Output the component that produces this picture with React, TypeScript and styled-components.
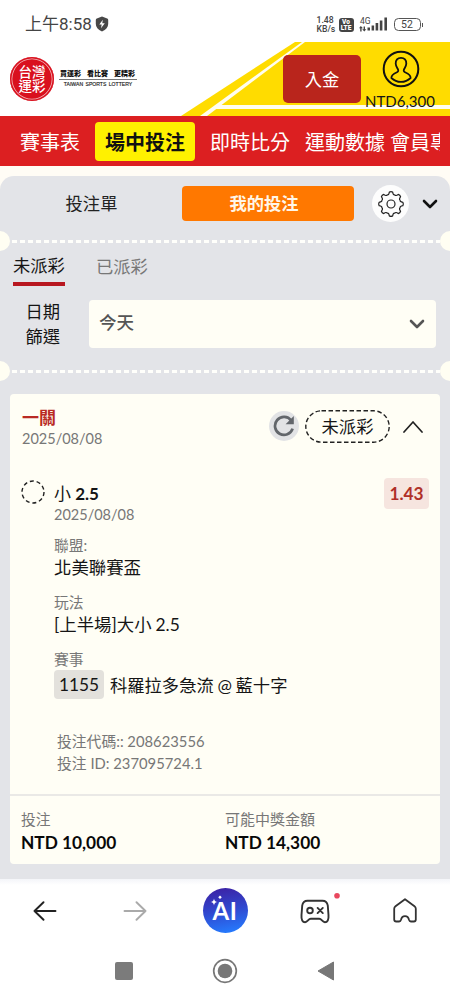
import React from "react";
import styled, { createGlobalStyle } from "styled-components";

const Global = createGlobalStyle`
  * { box-sizing: border-box; }
  body { margin: 0; background: #fff; }
`;

const Phone = styled.div`
  width: 450px;
  height: 1000px;
  overflow: hidden;
  display: flex;
  flex-direction: column;
  background: #fff;
  color: #151515;
  font-family: Lato, "Noto Sans CJK TC", sans-serif;
  white-space: nowrap;
`;

/* status bar */
const StatusBar = styled.div`
  height: 42px;
  flex: none;
  display: flex;
  align-items: center;
  padding: 6px 27px 0 25px;
  color: #444;
  font-family: Roboto, "Noto Sans CJK TC", sans-serif;
`;
const Clock = styled.span`
  font-size: 17px;
  line-height: 24px;
  width: 70px;
`;
const StatusRight = styled.div`
  margin-left: auto;
  display: flex;
  align-items: center;
  padding-top: 1px;
`;
const NetSpeed = styled.div`
  font-size: 8.7px;
  line-height: 9px;
  font-weight: 500;
  width: 22px;
  text-align: left;
`;
const Volte = styled.div`
  width: 15px;
  height: 14px;
  border-radius: 3px;
  background: #444;
  color: #fff;
  font-size: 6.5px;
  line-height: 6.5px;
  font-weight: 900;
  text-align: center;
  padding-top: 1px;
`;
const SignalSvg = styled.svg`
  margin: 0 6px 0 5px;
`;
const Battery = styled.div`
  width: 27px;
  height: 13px;
  border: 1.5px solid #555;
  border-radius: 4.5px;
  font-size: 10.5px;
  line-height: 11px;
  text-align: center;
  font-weight: 400;
`;
const BatteryTip = styled.div`
  width: 1.5px;
  height: 4px;
  margin-left: 1px;
  background: #555;
`;

/* header */
const Header = styled.header`
  height: 74px;
  flex: none;
  display: grid;
  > * { grid-area: 1 / 1; }
`;
const HeaderContent = styled.div`
  z-index: 1;
  display: flex;
  padding-left: 10px;
`;
const Seal = styled.div`
  width: 44px;
  height: 44px;
  margin-top: 15px;
  border-radius: 50%;
  background: #d9101e;
  box-shadow: inset 0 0 0 1.5px #d9101e, inset 0 0 0 2.3px #f3b9bb;
  color: #fff;
  padding-top: 8px;
`;
const SealLine = styled.div`
  font-size: 13.5px;
  line-height: 14px;
  font-weight: 500;
  text-align: center;
`;
const Slogan = styled.div`
  margin: 25px 0 0 5px;
  width: 78px;
  height: 24px;
`;
const SloganMain = styled.div`
  display: flex;
  justify-content: space-between;
  font-size: 7px;
  line-height: 12px;
  font-weight: 900;
  padding: 0 2px 0 1px;
  border-bottom: 1px solid #777;
  color: #111;
`;
const SloganSub = styled.div`
  font-family: "Liberation Sans", sans-serif;
  font-size: 5.1px;
  line-height: 9px;
  text-align: center;
  word-spacing: 1px;
  color: #222;
  -webkit-text-stroke: 0.15px #222;
`;
const Deposit = styled.button`
  margin: 13px 0 0 146px;
  width: 78px;
  height: 48px;
  border: 0;
  border-radius: 5px;
  background: #b9251c;
  color: #fff;
  font: 400 17.3px/50px Lato, "Noto Sans CJK TC", sans-serif;
  padding: 0;
`;
const Account = styled.div`
  width: 80px;
  display: flex;
  flex-direction: column;
  align-items: center;
  padding-top: 8px;
`;
const Balance = styled.div`
  font-size: 15px;
  line-height: 18px;
  margin-top: 4px;
  margin-left: -2px;
`;

/* navigation */
const Nav = styled.nav`
  height: 50px;
  flex: none;
  background: #dc1f21;
  padding: 6px 10px 0 10px;
`;
const NavStrip = styled.div`
  display: flex;
  overflow: hidden;
`;
const NavItem = styled.span<{ $active?: boolean; $w: number }>`
  flex: none;
  width: ${(p) => p.$w}px;
  height: 39px;
  text-align: center;
  border-radius: 4px;
  font-size: 20px;
  line-height: 40px;
  color: ${(p) => (p.$active ? "#111" : "#fff")};
  background: ${(p) => (p.$active ? "#fff100" : "transparent")};
  font-weight: ${(p) => (p.$active ? 700 : 400)};
`;

/* betting slip panel */
const PanelArea = styled.main`
  height: 713px;
  flex: none;
  padding-top: 10px;
  background: #fffcf5;
`;
const Panel = styled.div`
  height: 703px;
  border-radius: 14px 14px 0 0;
  background: #e3e4e8;
  overflow: hidden;
`;
const SlipTabs = styled.div`
  height: 55px;
  display: flex;
  align-items: center;
`;
const SlipTab = styled.div<{ $active?: boolean }>`
  width: ${(p) => (p.$active ? 172 : 182)}px;
  height: 35px;
  border-radius: 4px;
  text-align: center;
  font-size: 17.3px;
  line-height: 35px;
  background: ${(p) => (p.$active ? "#ff7800" : "transparent")};
  color: ${(p) => (p.$active ? "#fff6e8" : "#222")};
  font-weight: ${(p) => (p.$active ? 700 : 400)};
  padding-left: ${(p) => (p.$active ? 0 : 1)}px;
  padding-right: ${(p) => (p.$active ? 8 : 0)}px;
`;
const RoundButton = styled.div<{ $size: number; $bg: string }>`
  width: ${(p) => p.$size}px;
  height: ${(p) => p.$size}px;
  border-radius: 50%;
  background: ${(p) => p.$bg};
  display: flex;
  align-items: center;
  justify-content: center;
`;
const GearSlot = styled.div`
  margin: 0 13px 0 18px;
`;
const Tear = styled.div`
  height: 20px;
  display: flex;
  align-items: center;
  justify-content: space-between;
  background: repeating-linear-gradient(90deg, #fffffb 0 5px, transparent 5px 8px) 12px 9px / 428px 3px no-repeat;
`;
const Notch = styled.div<{ $side: "left" | "right" }>`
  width: 10px;
  height: 20px;
  background: #fffef2;
  border-radius: ${(p) => (p.$side === "left" ? "0 10px 10px 0" : "10px 0 0 10px")};
`;
const StatusTabs = styled.div`
  height: 35px;
  display: flex;
  padding-left: 13px;
  gap: 31px;
`;
const StatusTab = styled.span<{ $active?: boolean }>`
  width: 52px;
  height: 35px;
  font-size: 17.3px;
  line-height: ${(p) => (p.$active ? 29 : 32)}px;
  color: ${(p) => (p.$active ? "#151515" : "#777")};
  border-bottom: ${(p) => (p.$active ? "4px solid #b81720" : "0")};
`;
const FilterRow = styled.div`
  height: 75px;
  display: flex;
  padding: 14px 14px 0 0;
`;
const FilterLabel = styled.div`
  width: 89px;
  padding-left: 25.5px;
  font-size: 17.3px;
  line-height: 25px;
  margin-top: -1px;
`;
const Select = styled.div`
  flex: 1;
  height: 48px;
  border-radius: 4px;
  background: #fffef5;
  display: flex;
  align-items: center;
  justify-content: space-between;
  padding: 0 11px 0 10px;
  font-size: 17.5px;
  line-height: 46px;
  font-weight: 500;
  color: #555;
`;
const SelectValue = styled.span`
  height: 48px;
`;

/* bet card */
const Card = styled.section`
  height: 470px;
  margin: 13px 10px 0;
  border-radius: 4px;
  background: #fffef5;
  display: flex;
  flex-direction: column;
`;
const CardHead = styled.div`
  height: 84px;
  display: flex;
  padding: 13px 17px 0 12px;
`;
const HeadText = styled.div`
  flex: 1;
`;
const BetKind = styled.div`
  font-size: 17px;
  line-height: 22px;
  font-weight: 700;
  color: #b92a24;
`;
const HeadActions = styled.div`
  display: flex;
  align-items: center;
  height: 33px;
  margin-top: 3px;
`;
const RefreshSlot = styled.div`
  height: 32px;
`;
const PillSvg = styled.svg`
  grid-area: 1 / 1;
`;
const Pill = styled.div`
  display: grid;
  width: 85px;
  height: 33px;
  margin: 0 13px 0 6px;
`;
const PillText = styled.span`
  grid-area: 1 / 1;
  text-align: center;
  font-size: 17.3px;
  line-height: 34px;
`;
const Muted = styled.div<{ $lh?: number; $size?: number }>`
  font-size: ${(p) => p.$size ?? 14.8}px;
  line-height: ${(p) => p.$lh ?? 20}px;
  color: #777;
`;
const Selection = styled.div`
  height: 316px;
  display: flex;
  padding: 0 11px 0 11px;
`;
const RingSlot = styled.div`
  width: 33px;
  padding-top: 2px;
`;
const Details = styled.div`
  flex: 1;
`;
const Pick = styled.div`
  font-size: 17px;
  line-height: 24px;
  padding-top: 4px;
  height: 27px;
  font-weight: 700;
`;
const PickSide = styled.span`
  font-weight: 400;
`;
const Value = styled.div`
  font-size: 17.4px;
  line-height: 25px;
  height: 25px;
  word-spacing: -0.6px;
`;
const Field = styled.div<{ $first?: boolean }>`
  padding-top: ${(p) => (p.$first ? 10 : 12)}px;
`;
const Match = styled.div`
  display: flex;
  align-items: center;
  height: 29px;
  margin-top: 1px;
  font-size: 17.3px;
  word-spacing: -0.7px;
`;
const MatchNo = styled.span`
  width: 50px;
  height: 29px;
  margin-right: 6px;
  border-radius: 4px;
  background: #e3e1dc;
  text-align: center;
  line-height: 30px;
`;
const Codes = styled.div`
  padding: 32px 0 0 3px;
`;
const Odds = styled.div`
  width: 45px;
  height: 31px;
  border-radius: 4px;
  background: #f6e5df;
  color: #b03028;
  font-size: 17.3px;
  font-weight: 700;
  line-height: 32px;
  text-align: center;
`;
const Totals = styled.div`
  flex: 1;
  display: grid;
  grid-template-columns: 204px 1fr;
  border-top: 2px solid #eae9e6;
  padding: 13px 11px 0;
`;
const Amount = styled.div`
  font-size: 17.3px;
  line-height: 27px;
  font-weight: 700;
  color: #080808;
`;

/* bottom bars */
const BrowserBar = styled.div`
  height: 63px;
  flex: none;
  display: grid;
  grid-template-columns: repeat(5, 90px);
  justify-items: center;
  align-items: center;
  background: linear-gradient(#f4f5f9, #fff 6px);
`;
const AiButton = styled.div`
  width: 45px;
  height: 45px;
  border-radius: 50%;
  background: linear-gradient(170deg, #3c22a5 5%, #3049d0 50%, #257cff 95%);
  display: grid;
  > * { grid-area: 1 / 1; }
`;
const AiText = styled.span`
  font: 700 24px/45px Lato, sans-serif;
  color: #fff;
  text-align: center;
  letter-spacing: 0.5px;
`;
const SystemBar = styled.div`
  height: 58px;
  flex: none;
  display: flex;
  justify-content: center;
  align-items: center;
  gap: 79px;
  padding-bottom: 1px;
`;

const gearPath = (() => {
  const pt = (r: number, deg: number) => {
    const a = (deg * Math.PI) / 180;
    return `${(14 + r * Math.cos(a)).toFixed(2)} ${(14 + r * Math.sin(a)).toFixed(2)}`;
  };
  let d = `M${pt(12, -8)}`;
  for (let i = 0; i < 8; i++) {
    const c = i * 45;
    d += `Q${pt(12.8, c)} ${pt(12, c + 8)}`;
    d += `C${pt(10, c + 12)} ${pt(9.2, c + 16)} ${pt(9.9, c + 22.5)}`;
    d += `C${pt(9.2, c + 29)} ${pt(10, c + 33)} ${pt(12, c + 37)}`;
  }
  return d + "Z";
})();

const Gear = () => (
  <svg width="28" height="28" fill="none" stroke="#222" strokeWidth="1.2" strokeLinejoin="round">
    <path d={gearPath} />
    <circle cx="14" cy="14" r="4" />
  </svg>
);

const Chevron = ({ color, up, w = 16, h = 10, sw = 2.6 }: { color: string; up?: boolean; w?: number; h?: number; sw?: number }) => (
  <svg width={w} height={h} fill="none" stroke={color} strokeWidth={sw} strokeLinecap="round" strokeLinejoin="round">
    <path d={up ? `M1 ${h - 1}L${w / 2} 1L${w - 1} ${h - 1}` : `M2 2L${w / 2} ${h - 2}L${w - 2} 2`} />
  </svg>
);

const Shield = () => (
  <svg width="14" height="16" viewBox="0 0 14 16">
    <path d="M7 .6L12.2 2.5Q13.2 2.9 13.2 4V8Q13.2 12.6 7 15.4Q.8 12.6.8 8V4Q.8 2.9 1.8 2.5Z" fill="#484848" />
    <path d="M7.8 3.8L4.3 8.6H6.7L6 12.2L9.8 7.2H7.3Z" fill="#fff" />
  </svg>
);

const Signal = () => (
  <SignalSvg width="29" height="17" fill="#444">
    <text x="1" y="7.5" fontSize="8.5" fontFamily="Roboto, sans-serif">4G</text>
    <path d="M1.8 10L4 12.3H2.6V15.5H1.2V12.3H0Z M5.3 15.5L3.2 13.2H4.6V10.500H6V13.200H7.300Z" />
    <path d="M8.5 11.500h2.500v3h-2.500z M12.600 9.500h2.500v5h-2.500z M16.600 7h2.600v7.500h-2.600z M20.800 4.500h2.600v10h-2.600z M25.400 1.500h2.600v13h-2.600z" />
  </SignalSvg>
);

const HeaderArt = () => (
  <svg width="450" height="74">
    <path d="M295 0H450V74H181Z" fill="#ffdc00" />
    <path d="M302 0H305L207 74H200Z" fill="#fffdf0" />
    <path d="M219 63H450V67H212Z" fill="#fffdf0" />
  </svg>
);

const Person = () => (
  <svg width="38" height="38" fill="none" stroke="#111" strokeWidth="2">
    <circle cx="19" cy="19" r="17.300" />
    <path strokeWidth="1.800" strokeLinejoin="round" d="M19 7.800C15.600 7.800 13.500 10.200 13.700 13.800C13.800 16.200 15 17.600 15.900 19.200C16.700 20.800 16.200 21.800 14.500 22.500C11.400 23.700 9.500 24.600 9.400 28C12 30.500 15.200 31.900 19 31.900C22.800 31.900 26 30.500 28.600 28C28.500 24.600 26.600 23.700 23.500 22.500C21.800 21.800 21.300 20.800 22.100 19.200C23 17.600 24.200 16.200 24.300 13.800C24.500 10.200 22.400 7.800 19 7.800Z" />
  </svg>
);

const Refresh = () => (
  <svg width="22" height="22" fill="none">
    <path d="M18.200 5.500A9 9 0 1 0 19.600 13.600" stroke="#62666b" strokeWidth="2.700" />
    <path d="M20.800 1V9.200H12.600Z" fill="#62666b" />
  </svg>
);

const Arrow = ({ color, back }: { color: string; back?: boolean }) => (
  <svg width="24" height="20" fill="none" stroke={color} strokeWidth="1.900" strokeLinecap="round" strokeLinejoin="round">
    <path d={back ? "M22.500 10H1.500M10.500 1.200L1.500 10L10.500 18.800" : "M1.500 10H22.500M13.500 1.200L22.500 10L13.500 18.800"} />
  </svg>
);

const Gamepad = () => (
  <svg width="50" height="40" viewBox="-2 0 50 40" fill="none" stroke="#333" strokeWidth="1.900" strokeLinejoin="round" strokeLinecap="round">
    <path d="M15.500 9.700H30.500C33.800 9.700 35.300 11.700 35.800 14.700L36.500 24C36.900 29 35.400 31.200 32.900 31.200C30.200 31.200 29.800 27.800 27.200 27.800H18.800C16.200 27.800 15.800 31.200 13.100 31.200C10.600 31.200 9.100 29 9.500 24L10.200 14.700C10.700 11.700 12.200 9.700 15.500 9.700Z" />
    <circle cx="18" cy="19.500" r="2.800" />
    <path d="M25.600 16.900L30.800 22.100M30.800 16.900L25.600 22.100" />
    <circle cx="45" cy="4.700" r="2.800" fill="#e9485e" stroke="none" />
  </svg>
);

const Home = () => (
  <svg width="24" height="25" fill="none" stroke="#333" strokeWidth="1.800" strokeLinejoin="round">
    <path d="M12 1.200L21.500 8.300Q22.800 9.300 22.800 10.800V21.500Q22.800 23.500 20.800 23.500H17.800Q16.500 23.500 16 21.800C15.500 19.500 14 18.200 12 18.200C10 18.200 8.500 19.500 8 21.800Q7.500 23.500 6.200 23.500H3.200Q1.200 23.500 1.200 21.500V10.800Q1.200 9.300 2.500 8.300Z" />
  </svg>
);

export default function App() {
  return (
    <Phone>
      <Global />
      <StatusBar>
        <Clock>上午8:58</Clock>
        <Shield />
        <StatusRight>
          <NetSpeed>1.48<br />KB/s</NetSpeed>
          <Volte>Vo<br />LTE</Volte>
          <Signal />
          <Battery>52</Battery>
          <BatteryTip />
        </StatusRight>
      </StatusBar>

      <Header>
        <HeaderArt />
        <HeaderContent>
          <Seal>
            <SealLine>台灣</SealLine>
            <SealLine>運彩</SealLine>
          </Seal>
          <Slogan>
            <SloganMain><span>買運彩</span><span>看比賽</span><span>更精彩</span></SloganMain>
            <SloganSub>TAIWAN SPORTS LOTTERY</SloganSub>
          </Slogan>
          <Deposit>入金</Deposit>
          <Account>
            <Person />
            <Balance>NTD6,300</Balance>
          </Account>
        </HeaderContent>
      </Header>

      <Nav>
        <NavStrip>
          <NavItem $w={80}>賽事表</NavItem>
          <NavItem $w={5} />
          <NavItem $w={100} $active>場中投注</NavItem>
          <NavItem $w={110}>即時比分</NavItem>
          <NavItem $w={80}>運動數據</NavItem>
          <NavItem $w={5} />
          <NavItem $w={80}>會員專區</NavItem>
        </NavStrip>
      </Nav>

      <PanelArea>
        <Panel>
          <SlipTabs>
            <SlipTab>投注單</SlipTab>
            <SlipTab $active>我的投注</SlipTab>
            <GearSlot><RoundButton $size={37} $bg="#fdfdfd"><Gear /></RoundButton></GearSlot>
            <Chevron color="#111" />
          </SlipTabs>
          <Tear><Notch $side="left" /><Notch $side="right" /></Tear>
          <StatusTabs>
            <StatusTab $active>未派彩</StatusTab>
            <StatusTab>已派彩</StatusTab>
          </StatusTabs>
          <FilterRow>
            <FilterLabel>日期<br />篩選</FilterLabel>
            <Select><SelectValue>今天</SelectValue><Chevron color="#555" /></Select>
          </FilterRow>
          <Tear><Notch $side="left" /><Notch $side="right" /></Tear>

          <Card>
            <CardHead>
              <HeadText>
                <BetKind>一關</BetKind>
                <Muted $size={14.5}>2025/08/08</Muted>
              </HeadText>
              <HeadActions>
                <RefreshSlot><RoundButton $size={30} $bg="#e2e3e5"><Refresh /></RoundButton></RefreshSlot>
                <Pill>
                  <PillSvg width="85" height="33" fill="none" stroke="#222" strokeWidth="1.400" strokeDasharray="4.500 2.500">
                    <rect x=".8" y=".8" width="83.400" height="31.400" rx="15.700" />
                  </PillSvg>
                  <PillText>未派彩</PillText>
                </Pill>
                <Chevron up color="#222" w={20} h={12} sw={1.7} />
              </HeadActions>
            </CardHead>

            <Selection>
              <RingSlot>
                <svg width="24" height="24" fill="none" stroke="#222" strokeWidth="1.400" strokeDasharray="4 2.900">
                  <circle cx="12" cy="12" r="11" />
                </svg>
              </RingSlot>
              <Details>
                <Pick><PickSide>小</PickSide> 2.5</Pick>
                <Muted $size={14.5}>2025/08/08</Muted>
                <Field $first>
                  <Muted>聯盟:</Muted>
                  <Value>北美聯賽盃</Value>
                </Field>
                <Field>
                  <Muted>玩法</Muted>
                  <Value>[上半場]大小 2.5</Value>
                </Field>
                <Field>
                  <Muted>賽事</Muted>
                  <Match><MatchNo>1155</MatchNo>科羅拉多急流 @ 藍十字</Match>
                </Field>
                <Codes>
                  <Muted $lh={21.5}>投注代碼:: 208623556</Muted>
                  <Muted $lh={21.5}>投注 ID: 237095724.1</Muted>
                </Codes>
              </Details>
              <Odds>1.43</Odds>
            </Selection>

            <Totals>
              <div>
                <Muted>投注</Muted>
                <Amount>NTD 10,000</Amount>
              </div>
              <div>
                <Muted $size={15}>可能中獎金額</Muted>
                <Amount>NTD 14,300</Amount>
              </div>
            </Totals>
          </Card>
        </Panel>
      </PanelArea>

      <BrowserBar>
        <Arrow color="#222" back />
        <Arrow color="#aaa" />
        <AiButton>
          <AiText>AI</AiText>
          <svg width="45" height="45" fill="#fff">
            <path d="M11 10.500Q11.400 13.600 14.500 14Q11.400 14.400 11 17.500Q10.600 14.400 7.500 14Q10.600 13.600 11 10.500Z M17 7.500L18.800 9.300L17 11.100L15.200 9.300Z" />
          </svg>
        </AiButton>
        <Gamepad />
        <Home />
      </BrowserBar>

      <SystemBar>
        <svg width="18" height="18"><rect width="18" height="18" rx="2" fill="#7b7b7b" /></svg>
        <svg width="26" height="26"><circle cx="13" cy="13" r="11.300" fill="none" stroke="#777" strokeWidth="1.700" /><circle cx="13" cy="13" r="7.300" fill="#777" /></svg>
        <svg width="18" height="20"><path d="M16.500 1V19L1 10Z" fill="#777" stroke="#777" strokeLinejoin="round" /></svg>
      </SystemBar>
    </Phone>
  );
}
